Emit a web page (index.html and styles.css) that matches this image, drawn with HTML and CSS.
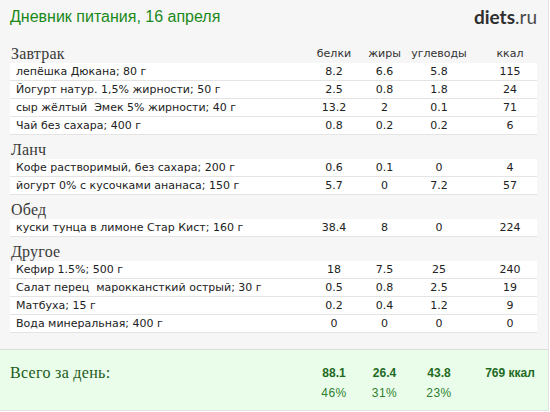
FILE: index.html
```html
<!DOCTYPE html>
<html lang="ru">
<head>
<meta charset="utf-8">
<title>Дневник питания</title>
<link rel="stylesheet" href="styles.css">
</head>
<body>
<div class="page">
  <header class="top">
    <h1 class="title">Дневник питания, 16 апреля</h1>
    <div class="logo"><b>diets</b>.ru</div>
  </header>

  <section class="meal">
    <div class="grid meal-head">
      <h2 class="meal-name">Завтрак</h2>
      <span class="col">белки</span><span class="col">жиры</span><span class="col">углеводы</span><span class="col kc">ккал</span>
    </div>
    <div class="grid row"><span class="name">лепёшка Дюкана; 80 г</span><span class="col">8.2</span><span class="col">6.6</span><span class="col">5.8</span><span class="col kc">115</span></div>
    <div class="grid row"><span class="name">Йогурт натур. 1,5% жирности; 50 г</span><span class="col">2.5</span><span class="col">0.8</span><span class="col">1.8</span><span class="col kc">24</span></div>
    <div class="grid row"><span class="name">сыр жёлтый&nbsp; Эмек 5% жирности; 40 г</span><span class="col">13.2</span><span class="col">2</span><span class="col">0.1</span><span class="col kc">71</span></div>
    <div class="grid row"><span class="name">Чай без сахара; 400 г</span><span class="col">0.8</span><span class="col">0.2</span><span class="col">0.2</span><span class="col kc">6</span></div>
  </section>

  <section class="meal">
    <div class="grid meal-head"><h2 class="meal-name">Ланч</h2></div>
    <div class="grid row"><span class="name">Кофе растворимый, без сахара; 200 г</span><span class="col">0.6</span><span class="col">0.1</span><span class="col">0</span><span class="col kc">4</span></div>
    <div class="grid row"><span class="name">йогурт 0% с кусочками ананаса; 150 г</span><span class="col">5.7</span><span class="col">0</span><span class="col">7.2</span><span class="col kc">57</span></div>
  </section>

  <section class="meal">
    <div class="grid meal-head"><h2 class="meal-name">Обед</h2></div>
    <div class="grid row"><span class="name">куски тунца в лимоне Стар Кист; 160 г</span><span class="col">38.4</span><span class="col">8</span><span class="col">0</span><span class="col kc">224</span></div>
  </section>

  <section class="meal">
    <div class="grid meal-head"><h2 class="meal-name">Другое</h2></div>
    <div class="grid row"><span class="name">Кефир 1.5%; 500 г</span><span class="col">18</span><span class="col">7.5</span><span class="col">25</span><span class="col kc">240</span></div>
    <div class="grid row"><span class="name">Салат перец&nbsp; мароккансткий острый; 30 г</span><span class="col">0.5</span><span class="col">0.8</span><span class="col">2.5</span><span class="col kc">19</span></div>
    <div class="grid row"><span class="name">Матбуха; 15 г</span><span class="col">0.2</span><span class="col">0.4</span><span class="col">1.2</span><span class="col kc">9</span></div>
    <div class="grid row"><span class="name">Вода минеральная; 400 г</span><span class="col">0</span><span class="col">0</span><span class="col">0</span><span class="col kc">0</span></div>
  </section>

  <footer class="totals">
    <div class="grid tot-main">
      <span class="tot-label">Всего за день:</span>
      <b class="col">88.1</b><b class="col">26.4</b><b class="col">43.8</b><b class="col kc">769 ккал</b>
    </div>
    <div class="grid tot-pct">
      <span></span>
      <span class="col">46%</span><span class="col">31%</span><span class="col">23%</span><span class="col kc"></span>
    </div>
  </footer>
</div>
</body>
</html>
```

FILE: styles.css
```css
* { box-sizing: border-box; }
html, body { margin: 0; padding: 0; background: #fff; }
.page {
  width: 549px;
  height: 411px;
  background: #f6f6f6;
  border-right: 1px solid #e2e2e2;
  border-bottom: 1px solid #e2e2e2;
  overflow: hidden;
}
.top {
  height: 39px;
  display: flex;
  justify-content: space-between;
  align-items: flex-start;
  padding: 7px 11px 0 10px;
}
.title {
  margin: 0;
  font: 16px/19px "Liberation Sans", Arial, sans-serif;
  color: #1a891a;
  font-weight: normal;
}
.logo {
  font: 19px/20px Lato, "Open Sans", sans-serif;
  color: #4a4a4a;
  margin-top: 0;
}
.logo b { color: #2f2f2f; font-weight: 700; }

.meal { margin: 0 11px 0 10px; }
.grid {
  display: grid;
  grid-template-columns: 1fr 50px 51px 58px 69px;
  align-items: center;
}
.col { text-align: center; }
.kc { padding-left: 15px; }
.meal-head {
  height: 24px;
  align-items: end;
  font: 11px/14px "DejaVu Sans", Verdana, sans-serif;
  color: #333;
  padding-bottom: 0;
}
.meal-name {
  margin: 0;
  font: normal 16px/19px "Liberation Serif", "Times New Roman", serif;
  color: #3a3a3a;
  padding-left: 1px;
  letter-spacing: 0.2px;
}
.meal-head .col { padding-bottom: 2px; }
.row {
  height: 18px;
  background: #fff;
  border-bottom: 1px solid #e4e4e4;
  font: 11px/14px "DejaVu Sans", Verdana, sans-serif;
  color: #222;
}
.name { padding-left: 6px; white-space: nowrap; }

.totals {
  margin-top: 16px;
  border-top: 1px solid #dcdcdc;
  background: #eafdea;
  height: 61px;
  padding: 12px 11px 0 10px;
  color: #1f6b1f;
}
.tot-main { height: 20px; }
.tot-label {
  font: 16px/19px "Liberation Serif", "Times New Roman", serif;
  color: #1c5c1c;
  letter-spacing: 0.3px;
}
.tot-main b {
  font: bold 12px/16px "Liberation Sans", Arial, sans-serif;
  color: #1f6a1f;
  padding-top: 2px;
}
.tot-pct {
  margin-top: 3px;
  font: 12px/16px "Liberation Sans", Arial, sans-serif;
  color: #2f7f2f;
  letter-spacing: 0.5px;
}
```
